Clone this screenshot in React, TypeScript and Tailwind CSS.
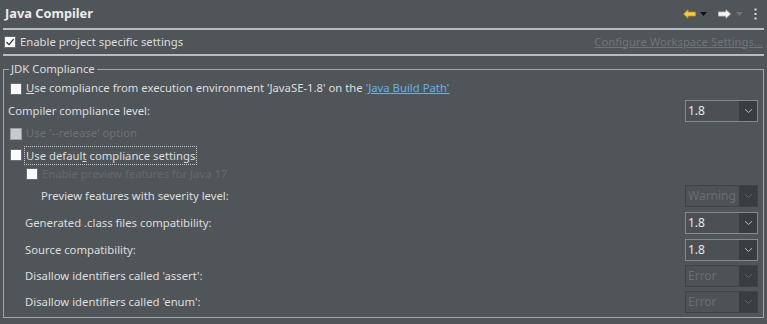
import React from 'react';

const font = { fontFamily: '"Noto Sans", "Open Sans", sans-serif' };

function Check({ checked = false, disabled = false }: { checked?: boolean; disabled?: boolean }) {
  return (
    <span
      className={`inline-flex items-center justify-center w-[12px] h-[12px] shrink-0 border ${
        disabled ? 'bg-[#c9cacb] border-[#9a9c9e]' : 'bg-[#fbfbfb] border-[#6a6d70]'
      }`}
    >
      {checked && (
        <svg width="10" height="10" viewBox="0 0 10 10">
          <path d="M1.5 5.2 L4 7.6 L8.6 2.2" fill="none" stroke="#2b2b2b" strokeWidth="1.3" />
        </svg>
      )}
    </span>
  );
}

function Combo({ value, disabled = false }: { value: string; disabled?: boolean }) {
  return (
    <div
      className={`flex w-[73px] h-[22px] border ${
        disabled ? 'border-[#414447] bg-[#4d5256]' : 'border-[#85898c] bg-[#4b5054]'
      }`}
    >
      <span
        className={`flex-1 flex items-center pl-[2px] text-[12px] ${
          disabled ? 'text-[#696e72]' : 'text-[#e6e6e6]'
        }`}
      >
        {value}
      </span>
      <span className="w-[18px] flex items-center justify-center bg-[#3a3d40]">
        <svg width="9" height="6" viewBox="0 0 9 6">
          <path d="M1 1.2 L4.5 4.5 L8 1.2" fill="none" stroke={disabled ? '#62666a' : '#b8bbbe'} strokeWidth="1" />
        </svg>
      </span>
    </div>
  );
}

function ComboRow({ label, value, disabled, indent, h }: { label: string; value: string; disabled?: boolean; indent: string; h: string }) {
  return (
    <div className={`flex items-center justify-between pr-[5px] ${h} ${indent}`}>
      <span>{label}</span>
      <Combo value={value} disabled={disabled} />
    </div>
  );
}

export default function App() {
  return (
    <div className="w-[767px] h-[324px] overflow-hidden bg-[#505559] text-[11.3px] text-[#dddedf]" style={font}>
      {/* header */}
      <div className="h-[28px] flex items-center justify-between pl-[5px] pr-[10px]">
        <span className="text-[12.8px] font-bold text-[#ececec]">Java Compiler</span>
        <div className="flex items-center">
          <svg width="13" height="10" viewBox="0 0 13 10" className="mr-[4px]">
            <path d="M0.5 5 L5 0.8 L5 3 L12.5 3 L12.5 7 L5 7 L5 9.2 Z" fill="#f2c94c" stroke="#d18b12" strokeWidth="0.8" />
          </svg>
          <svg width="7" height="4" viewBox="0 0 7 4" className="mr-[11px]">
            <path d="M0 0 L7 0 L3.5 4 Z" fill="#111111" />
          </svg>
          <svg width="13" height="10" viewBox="0 0 13 10" className="mr-[5px]">
            <path d="M12.5 5 L8 0.8 L8 3 L0.5 3 L0.5 7 L8 7 L8 9.2 Z" fill="#f4f4f4" stroke="#c8c8c8" strokeWidth="0.8" />
          </svg>
          <svg width="7" height="4" viewBox="0 0 7 4" className="mr-[11px]">
            <path d="M0 0 L7 0 L3.5 4 Z" fill="#70757a" />
          </svg>
          <svg width="3" height="12" viewBox="0 0 3 12">
            <rect x="0.5" y="0.5" width="2" height="2" fill="#e0e0e0" />
            <rect x="0.5" y="5" width="2" height="2" fill="#e0e0e0" />
            <rect x="0.5" y="9.5" width="2" height="2" fill="#e0e0e0" />
          </svg>
        </div>
      </div>
      <div className="mx-[3px] h-[2px] bg-[#b9bcbe]" />

      <div className="h-[24px] flex items-center justify-between pl-[4px] pr-[4px]">
        <label className="flex items-center gap-[4px]">
          <Check checked />
          <span>
            Enable pro<span className="underline">j</span>ect specific settings
          </span>
        </label>
        <span className="underline text-[#6f7478]">Configure Workspace Settings...</span>
      </div>
      <div className="mx-[3px] h-[2px] bg-[#b9bcbe]" />

      <fieldset className="mx-[3px] mt-[5px] border border-[#a3a7aa] pb-[2px]">
        <legend className="ml-[5px] px-[2px] leading-[16px]">JDK Compliance</legend>

        <div className="h-[23px] flex items-center gap-[4px] pl-[6px]">
          <Check />
          <span>
            <span className="underline">U</span>se compliance from execution environment 'JavaSE-1.8' on the{' '}
            <span className="underline text-[#65b2e6]">'Java Build Path'</span>
          </span>
        </div>

        <ComboRow label="Compiler compliance level:" value="1.8" indent="pl-[4px]" h="h-[22px]" />

        <div className="h-[23px] flex items-center gap-[4px] pl-[6px] text-[#6c7175]">
          <Check disabled />
          <span>Use '--release' option</span>
        </div>

        <div className="h-[20px] flex items-center gap-[2px] pl-[6px]">
          <Check />
          <span className="border border-dotted border-[#c6c8ca] px-[1px] leading-[17px]">
            Use defaul<span className="underline">t</span> compliance settings
          </span>
        </div>

        <div className="h-[18px] flex items-center gap-[4px] pl-[22px] text-[#64696d]">
          <Check />
          <span>Enable preview features for Java 17</span>
        </div>

        <ComboRow label="Preview features with severity level:" value="Warning" disabled indent="pl-[37px]" h="h-[26px]" />
        <ComboRow label="Generated .class files compatibility:" value="1.8" indent="pl-[21px]" h="h-[28px]" />
        <ComboRow label="Source compatibility:" value="1.8" indent="pl-[21px]" h="h-[26px]" />
        <ComboRow label="Disallow identifiers called 'assert':" value="Error" disabled indent="pl-[21px]" h="h-[26px]" />
        <ComboRow label="Disallow identifiers called 'enum':" value="Error" disabled indent="pl-[21px]" h="h-[26px]" />
      </fieldset>
    </div>
  );
}
